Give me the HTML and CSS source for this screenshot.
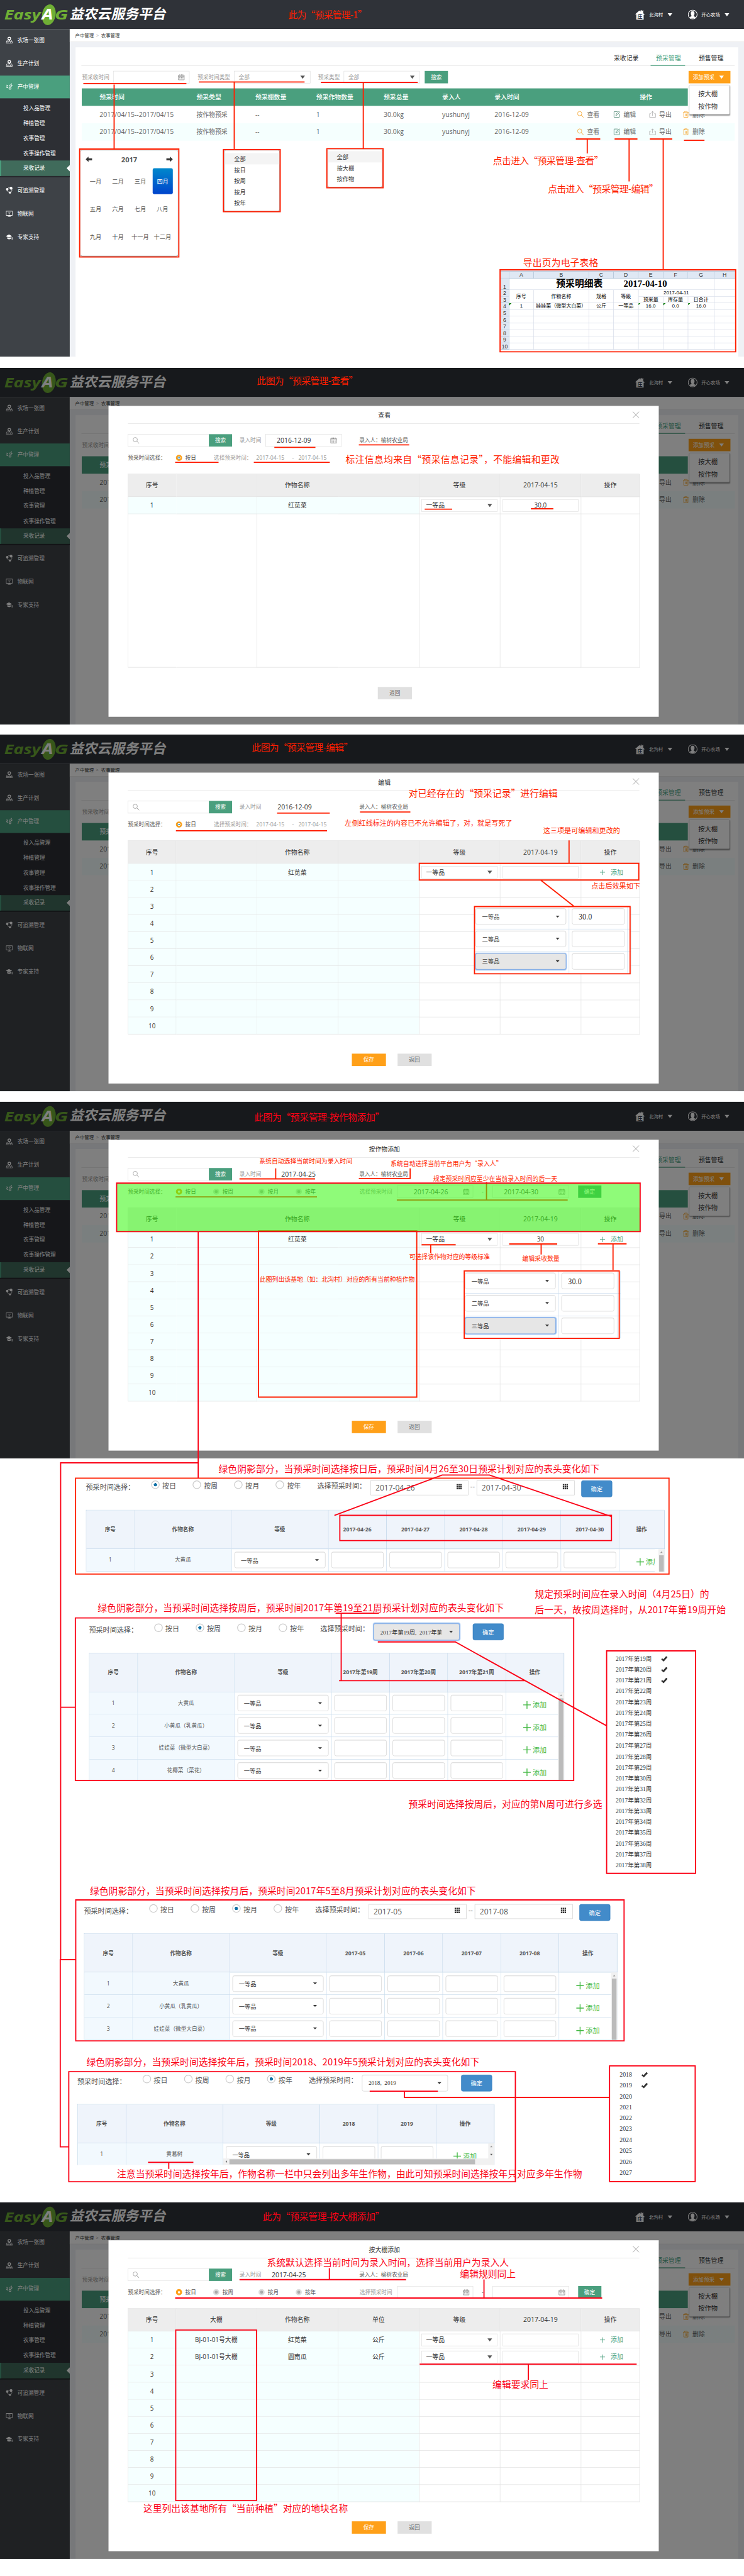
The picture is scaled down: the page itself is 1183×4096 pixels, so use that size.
FILE: index.html
```html
<!DOCTYPE html>
<html lang="zh-CN">
<head>
<meta charset="utf-8">
<title>益农云服务平台 - 预采管理</title>
<link rel="stylesheet" href="styles.css">
</head>
<body>
<svg width="0" height="0" class="defs">
  <symbol id="i-pin" viewBox="0 0 20 20"><path d="M10 1a5 5 0 0 1 5 5c0 3-3 5-5 8-2-3-5-5-5-8a5 5 0 0 1 5-5z" fill="currentColor"/><circle cx="10" cy="6" r="2.4" fill="#3e4247"/><path d="M5 12H3l-2 7h18l-2-7h-2M2 15.500h16M7 14l-1 5M13 14l1 5" fill="none" stroke="currentColor" stroke-width="1.400"/></symbol>
  <symbol id="i-leaf" viewBox="0 0 20 20"><path d="M2 5c3 0 4 2 4 5C3 10 2 8 2 5zM1 10c3 0 5 2 6 5-4 0-6-2-6-5zM17 1c1 3-1 5-4 6 0-3 1-5 4-6zM19 6c0 3-2 5-6 5 0-3 2-5 6-5zM10 4c2 2 2 5 0 7-1-2-1-5 0-7z" fill="currentColor"/><circle cx="12" cy="15" r="3" fill="none" stroke="currentColor" stroke-width="2"/></symbol>
  <symbol id="i-nodes" viewBox="0 0 20 20"><circle cx="4" cy="7" r="3.600" fill="currentColor"/><circle cx="15" cy="4" r="4" fill="currentColor"/><circle cx="12" cy="16.500" r="3" fill="currentColor"/><path d="M4 7c0 6 3 8 8 9.500M15 4c4 4 3 9-2 12M5 5c2-3 6-3 10-1" fill="none" stroke="currentColor" stroke-width="1.300"/></symbol>
  <symbol id="i-screen" viewBox="0 0 20 20"><path d="M1 3h18v12H1zM6 18h8M10 15v3" fill="none" stroke="currentColor" stroke-width="1.800"/><path d="M6 8q4-3 8 0M8 10q2-1.500 4 0" fill="none" stroke="currentColor"/><circle cx="10" cy="12" r="1" fill="currentColor"/></symbol>
  <symbol id="i-cap" viewBox="0 0 20 20"><path d="M0 8l9-5 9 5-9 4zM4 11l5 2.500 6-2.500v4c-3 2.500-8 2.500-11 0zM17 11h2v7h-2z" fill="currentColor"/></symbol>
  <symbol id="i-cal" viewBox="0 0 18 16"><path d="M1.500 3h15v12h-15zM1.500 6.500h15M5 .5v4M9 .5v4M13 .5v4" fill="none" stroke="#666"/><path d="M4 9.500h10M4 12.500h10" stroke="#666" stroke-width="1.400" stroke-dasharray="2 2"/></symbol>
  <symbol id="i-search" viewBox="0 0 18 18"><circle cx="7" cy="7" r="5.500" fill="none" stroke="currentColor" stroke-width="1.300"/><path d="M11 11l6 6" stroke="currentColor" stroke-width="1.600"/></symbol>
  <symbol id="i-edit" viewBox="0 0 20 20"><path d="M12 2H3a1.500 1.500 0 0 0-1.500 1.500V17A1.500 1.500 0 0 0 3 18.500h13a1.500 1.500 0 0 0 1.500-1.500V9M7 13l1-4 8-7.500 2.500 2.500-8 8z" fill="none" stroke="#3c7a64" stroke-width="1.400"/></symbol>
  <symbol id="i-out" viewBox="0 0 20 20"><path d="M5 8H1.500v10.500h17V8H15M10 14V1.500M6 5.500l4-4 4 4" fill="none" stroke="#999" stroke-width="1.200"/></symbol>
  <symbol id="i-bin" viewBox="0 0 18 20"><path d="M1 4.500h16M5.500 4V1.500h7V4M3 4.500v14h12v-14M7 8v7.500M11 8v7.500" fill="none" stroke="#f5a328" stroke-width="1.500"/></symbol>
  <symbol id="i-x" viewBox="0 0 18 18"><path d="M1 1l16 16M17 1L1 17" stroke="#999" stroke-width="1.500"/></symbol>
  <symbol id="i-grid" viewBox="0 0 14 14"><path d="M0 2h14M0 7h14M0 12h14" stroke="#333" stroke-width="4" stroke-dasharray="4 1"/></symbol>
  <symbol id="i-check" viewBox="0 0 18 16"><path d="M0 9l3-3 3 3L14 0l4 3L7 15z" fill="#333"/></symbol>
  <symbol id="i-plus" viewBox="0 0 20 20"><path d="M10 0v20M0 10h20" stroke="currentColor" stroke-width="2.200"/></symbol>
</svg>

<main class="frame">
<div class="board">
  <section class="screen" data-screen="list"></section>
  <section class="screen under" data-screen="view"></section>
  <section class="screen under" data-screen="edit"></section>
  <section class="screen under" data-screen="crop"></section>
  <div class="variants"></div>
  <section class="screen under" data-screen="shed"></section>

  <svg class="marks" viewBox="0 0 1920 6645" width="1920" height="6645">
    <g class="ln">
      <path d="M215 215.500H481M294.500 218V384M205.500 384.500H461.500V663H205.500zM513 211.500H786M604.500 212V386M576.500 386H723V546H576.500zM828 212.500H1078M937.500 213V383M843.500 383.500H988.500V484.500H843.500z"/>
      <path d="M1486 358.500H1549M1515.500 358V396M1586 358.500H1645M1623.500 360V468M1677 358.500H1735M1711.500 360V695M1765 362H1818M1290.500 696H1898.500V907.500H1290.500z"/>
      <path d="M708 1154H814M926 1147.500H1056M452 1192.500H564M655 1192.500H851M1096 1313.500H1167M1370 1312.500H1428"/>
      <path d="M715 2097.500H851M929 2094.500H1059M454 2143H844M1468.500 2168V2226M1082 2227H1648.500V2270H1082zM1396 2271L1480 2337M1224.500 2338.500H1626V2512H1224.500z"/>
      <path d="M618 3041H813M711.500 3014V3041M926 3040H1060M1058.500 3014V3040M453 3087.500H818M1255.500 3049V3094M1024 3095.500H1465M667 3175H1075.500V3604H667zM1088 3211H1176M1111.500 3211V3233M1314 3209H1438M1396.500 3209V3236M1543 3208.500H1617M1582 3208V3276M1198 3278.500H1598V3452.500H1198z"/>
      <path d="M195 3813H1726.500V4060.500H195z"/>
    </g>
    <rect x="301" y="3052" width="1351" height="125" class="shade"/>
    <g class="ln b">
      <path d="M301 3052H1652V3177H301zM511.500 3178V3813M511.500 3773.500H156.500V5055H195M156.500 4404H194M155.500 5054V5538H177"/>
      <path d="M877 3909H1578V3974H877zM863 3909L1141 3805H1263L1578 3912"/>
      <path d="M194.500 4173.500H1480.500V4593H194.500zM866 4161.500H978M880.500 4161V4336M875 4335.500H1355M975 4235.500H1175L1564 4451M1565.500 4258.500H1795V4832.500H1565.500z"/>
      <path d="M195.500 4901H1610.500V5264.500H195.500zM177.500 5344H1330V5628H177.500zM954 5394.500H1130M1043.500 5394V5410.500H1572M1573 5329H1794V5627.500H1573zM382 5578H499M435.500 5578V5595"/>
      <path d="M618 5880.500H1048M850 5851V5880M1249 5880V5928M452 5928H1554M453.500 6010.500H662V6450.500H453.500zM1083 6098.500H1643M1363.500 6098V6139"/>
    </g>
    <g class="note">
      <text x="744" y="47" textLength="203">此为“预采管理-1”</text>
      <text x="1272" y="424" textLength="285">点击进入“预采管理-查看”</text>
      <text x="1414" y="496" textLength="285">点击进入“预采管理-编辑”</text>
      <text x="1350" y="687" textLength="194">导出页为电子表格</text>
      <text x="663" y="991" textLength="261">此图为“预采管理-查看”</text>
      <text x="892" y="1194" textLength="552">标注信息均来自“预采信息记录”，不能编辑和更改</text>
      <text x="650" y="1937" textLength="261">此图为“预采管理-编辑”</text>
      <text x="1054" y="2056" textLength="385">对已经存在的“预采记录”进行编辑</text>
      <text x="890" y="2130" textLength="432" class="s18">左侧红线标注的内容已不允许编辑了，对，就是写死了</text>
      <text x="1402" y="2150" textLength="198" class="s18">这三项是可编辑和更改的</text>
      <text x="1526" y="2293" textLength="126" class="s18">点击后效果如下</text>
      <text x="669" y="3001" textLength="240" class="s16">系统自动选择当前时间为录入时间</text>
      <text x="1008" y="3007" textLength="288" class="s16">系统自动选择当前平台用户为“录入人”</text>
      <text x="1118" y="3046" textLength="320" class="s16">规定预采时间应至少在当前录入时间的后一天</text>
      <text x="1056" y="3248" textLength="208" class="s16">可选择该作物对应的等级标准</text>
      <text x="1348" y="3252" textLength="96" class="s16">编辑采收数量</text>
      <text x="670" y="3307" textLength="400" class="s16">此图列出该基地（如：北沟村）对应的所有当前种植作物</text>
    </g>
    <g class="note nb">
      <text x="656" y="2891" textLength="336">此图为“预采管理-按作物添加”</text>
      <text x="564" y="3798" textLength="983">绿色阴影部分，当预采时间选择按日后，预采时间4月26至30日预采计划对应的表头变化如下</text>
      <text x="252" y="4157" textLength="1048">绿色阴影部分，当预采时间选择按周后，预采时间2017年第19至21周预采计划对应的表头变化如下</text>
      <text x="1380" y="4121" textLength="450">规定预采时间应在录入时间（4月25日）的</text>
      <text x="1380" y="4162" textLength="493">后一天，故按周选择时，从2017年第19周开始</text>
      <text x="1054" y="4663" textLength="500">预采时间选择按周后，对应的第N周可进行多选</text>
      <text x="232" y="4886" textLength="996">绿色阴影部分，当预采时间选择按月后，预采时间2017年5至8月预采计划对应的表头变化如下</text>
      <text x="223" y="5328" textLength="1014">绿色阴影部分，当预采时间选择按年后，预采时间2018、2019年5预采计划对应的表头变化如下</text>
      <text x="302" y="5617" textLength="1200">注意当预采时间选择按年后，作物名称一栏中只会列出多年生作物，由此可知预采时间选择按年只对应多年生作物</text>
      <text x="678" y="5727" textLength="314">此为“预采管理-按大棚添加”</text>
      <text x="689" y="5846" textLength="624">系统默认选择当前时间为录入时间，选择当前用户为录入人</text>
      <text x="1187" y="5875" textLength="144">编辑规则同上</text>
      <text x="1271" y="6160" textLength="144">编辑要求同上</text>
      <text x="370" y="6480" textLength="528">这里列出该基地所有“当前种植”对应的地块名称</text>
    </g>
  </svg>
</div>
</main>
<script src="app.js"></script>
</body>
</html>
```

FILE: styles.css
```css
* { box-sizing: border-box; }
body { margin: 0; background: #fff; }
.defs { position: absolute; }
.frame { width: 1183px; height: 4096px; overflow: hidden; position: relative; contain: strict; }
.board {
  width: 1920px; height: 6645px; position: relative; background: #fff;
  transform: scale(.616146, .616403); transform-origin: 0 0;
  font: 14px/20px "Open Sans", "Noto Sans CJK SC", sans-serif; color: #333; white-space: nowrap;
}
.ico { width: 18px; height: 18px; flex: none; display: block; }

/* shell */
.screen { height: 920px; position: relative; overflow: hidden; background: #eff1f5; }
.screen[data-screen="view"] { margin-top: 29px; }
.screen[data-screen="edit"] { margin-top: 26px; }
.screen[data-screen="crop"] { margin-top: 27px; }
.top { height: 75px; background: #2f3238; display: flex; align-items: center; color: #fff; font-size: 12px; padding-right: 38px; }
.logo { width: 450px; height: 75px; margin-right: auto; }
.logo text { font-family: "Open Sans", "Noto Sans CJK SC", sans-serif; font-weight: bold; }
.house { width: 26px; height: 26px; margin-right: 10px; }
.house text { font: bold 13px "Noto Sans CJK SC"; }
.tri { border: 6px solid transparent; border-top: 8px solid #fff; border-bottom: 0; margin-left: 12px; }
.user { width: 25px; height: 25px; margin: 0 10px 0 40px; }
.cols { display: flex; height: 845px; }
.side { width: 180px; background: #3e4247; color: #fff; flex: none; }
.side > div { height: 60px; display: flex; align-items: center; padding: 0 0 4px 15px; gap: 12px; }
.side > .on { background: #4a9f7e; height: 59px; margin-bottom: 0; }
.side .sub { display: block; background: #2d2f34; height: 203px; padding: 7px 0 0; border-bottom: 3px solid #27292d; }
.sub p { margin: 0; height: 38.5px; padding-left: 60px; line-height: 36px; }
.sub .act { background: #406b5b; border-left: 3px solid #4a9f7e; padding-left: 57px; height: 40px; position: relative; line-height: 38px; margin-top: -1px; }
.act::after { content: ""; position: absolute; right: 0; top: 12px; border: 8px solid transparent; border-left: 0; border-right-color: #fff; }
.side .gap { margin-top: 6px; }
.main { flex: 1; }
.crumb { height: 33px; background: #fff; border-bottom: 1px solid #ddd; font-size: 12px; padding-left: 14px; line-height: 33px; }
.crumb i { font-style: normal; color: #999; margin: 0 6px; }
.panel { margin: 14px 15px 0 15px; background: #fff; height: 798px; position: relative; padding: 0 9px 0 15px; }
.tabs { height: 48px; border-bottom: 1px solid #ddd; display: flex; justify-content: flex-end; padding-right: 11px; }
.tabs span { font-size: 16px; line-height: 57px; margin-left: 28px; padding: 0 18px 0 18px; height: 48px; }
.tabs .on { color: #4a9f7e; border-bottom: 2px solid #4a9f7e; padding: 0 11px 0 14px; margin-left: 13px; }
.tabs .on + span { margin-left: 17px; }
.filters { display: flex; height: 32px; margin-top: 13px; padding-left: 2px; align-items: center; color: #999; }
.box { border: 1px solid #dcdcdc; height: 32px; display: flex; align-items: center; justify-content: space-between; padding: 0 11px; background: #fff; margin-left: 10px; }
.w197 { width: 197px; }
.dn { border: 6px solid transparent; border-top: 8px solid #555; border-bottom: 0; margin-right: 2px; }
.btn { background: #4a9f7e; color: #fff; height: 32px; width: 60px; line-height: 32px; text-align: center; flex: none; }
.btn.orange { background: #ffa019; }
.btn.add { width: 108px; margin-left: auto; margin-right: 11px; display: flex; align-items: center; padding-left: 11px; }
.list { margin-top: 13px; margin-left: 1px; font-size: 16px; color: #666; }
.lr { display: grid; grid-template-columns: 250px 152px 157px 174px 151px 135px 213px 94px 92px 86px 1fr; padding-left: 46px; height: 45px; align-items: center; padding-bottom: 1px; }
.lr.h { background: #4a9f7e; color: #fff; width: 1564px; font-weight: 500; }
.lr.alt { background: #f5fffe; }
.lr .n { font-size: 17px; }
.op { display: flex; align-items: center; gap: 8px; }
.op .ico { color: #f5a328; }
.drop { position: absolute; z-index: 2; left: 1583px; top: 97px; width: 105px; height: 76px; background: #fff; border: 1px solid #ccc; border-radius: 3px; box-shadow: 1px 2px 3px rgba(0,0,0,.4); padding: 7px 0 0 23px; font-size: 16.700px; line-height: 31px; }

/* parts of the page that lie behind an open dialog */
.under .tabs > :first-child,
.under .lr > :nth-child(n+2):nth-child(-n+9),
.under .lr.h > :nth-child(n+2),
.under .filters > :not(.add):not(:first-child) { visibility: hidden; }
.under .lr > :first-child { width: 28px; overflow: hidden; }
.under .filters > :first-child { width: 70px; clip-path: inset(0 0 0 0); }

.pop { position: absolute; background: #fff; border-radius: 4px; box-shadow: 0 1px 3px rgba(0,0,0,.5); }
.pick { left: 208px; top: 388px; width: 251px; height: 272px; font-size: 15px; color: #555; }
.pick header { display: flex; justify-content: space-between; align-items: center; padding: 0 13px; height: 46px; padding-top: 0; }
.pick header b { font-size: 18px; }
.months { display: grid; grid-template-columns: 57.500px 57.500px 57.500px 57.500px; grid-template-rows: 67px 67px 67px; row-gap: 5px; padding-left: 10px; line-height: 67px; text-align: center; }
.months .on { background: linear-gradient(#08c, #04c); color: #fff; border-radius: 4px; margin: 0 2px 0 3px; }
.opts { font-size: 15px; line-height: 28.500px; }
.opts div { padding-left: 25px; }
.opts div:first-child { background: #f4f4f4; }
.o1 { left: 579px; top: 388px; width: 142px; height: 156px; padding-top: 7px; }
.o2 { left: 846px; top: 386px; width: 140px; height: 96px; padding-top: 4px; }
.o2 div { padding-left: 23px; }
.sheet { position: absolute; left: 1292px; top: 697px; width: 605px; height: 209px; overflow: hidden; display: grid; background: #fff; grid-template-columns: 22px 63.500px 142.500px 64px 63.500px 64.500px 63.500px 68px 54px; grid-template-rows: 4px 17px 30px 17px 17px repeat(8, 17.200px); font: 13px/16px "Liberation Sans", "Noto Sans CJK SC", sans-serif; color: #000; text-align: center; }
.sheet > * { border-right: 1px solid #d0d7e5; border-bottom: 1px solid #d0d7e5; overflow: hidden; }
.sheet .hd { background: #dfe8f4; border-color: #9eb6ce; color: #333; font-size: 14px; display: flex; align-items: flex-end; justify-content: center; }
.sheet .ttl { font: bold 24px/29px "Liberation Serif", "Noto Sans CJK SC", serif; display: flex; justify-content: center; gap: 54px; }
.sheet .mid { line-height: 33px; }
.sheet .tk { background: linear-gradient(135deg, #0a7a0a 4px, transparent 4px); }

/* modal */
.mask { position: absolute; inset: 0; background: rgba(0,0,0,.5); z-index: 3; }
.modal { position: absolute; z-index: 4; left: 280px; top: 98px; width: 1420px; height: 802px; background: #fff; padding: 0 50px; }
.mh { height: 46px; border-bottom: 1px solid #ddd; font-size: 16px; text-align: center; line-height: 50px; position: relative; padding-left: 4px; }
.mh .ico { position: absolute; right: 0; top: 14px; }
.r1 { display: flex; align-items: center; height: 32px; margin-top: 27px; }
.r1 .box:first-child { width: 209px; margin: 0; color: #999; border-right: 0; }
.gl { color: #999; }
.date { font-size: 17px; }
.bare { border-color: transparent; }
.r1 .who { margin-left: 45px; color: #555; }
.r2 { display: flex; align-items: center; height: 32px; margin-top: 13px; color: #555; }
.rad { width: 16px; height: 16px; border-radius: 50%; border: 4px solid #ddd; background: #aaa; margin-right: 8px; flex: none; }
.rad.on { border: 5px solid #ffa019; background: #fff; }
.rad.blue { border-width: 4px; background: #1a85c8; box-shadow: inset 0 0 0 2px #fff; }
.opt { display: flex; align-items: center; }
.r2 .box { margin-left: 0; padding-right: 8px; }
.grid { display: grid; margin-top: 25px; border-top: 1px solid #ddd; border-left: 1px solid #ddd; grid-template-columns: 123.500px 208px 210.500px 208.500px 209px 209.500px 151px; grid-template-rows: 59px; grid-auto-rows: 44px; font-size: 16px; color: #333; }
.grid.single { grid-template-rows: 59px 44px 396px; }
.grid > div { border-right: 1px solid #ddd; border-bottom: 1px solid #ddd; display: flex; align-items: center; justify-content: center; }
.grid > .h { background: #ededed; }
.grid > .t { background: #f5ffff; }
.grid > .nl { border-right-color: transparent; }
.grid .box { width: 196px; margin: 0; }
.grid .c { justify-content: center; }
.addop { color: #4a9f7e; display: flex; align-items: center; gap: 14px; padding-left: 6px; }
.addop .ico { width: 14px; height: 14px; }
.acts { display: flex; gap: 30px; padding-left: 577.500px; margin-top: 50px; }
.acts.one { padding-left: 645px; }
.acts span { width: 88px; height: 32px; line-height: 32px; text-align: center; background: #e0e0e0; color: #666; }
.acts .save { background: #ffa019; color: #fff; }
.mini { position: absolute; z-index: 5; width: 400px; height: 173px; background: #fff; display: grid; grid-template-columns: 243px 151px 6px; grid-auto-rows: 57.800px; }
.mini.m-edit { left: 1226px; top: 444px; }
.mini.m-crop { left: 1199px; top: 437px; }
.mini > div { border-right: 1px solid #c5d9ec; border-bottom: 1px solid #c5d9ec; padding: 4px 7px 0 1px; }
.mini > div:nth-child(3n+2) { padding-left: 7px; }

/* date-range variants */
.variants { height: 1919px; overflow: hidden; position: relative; color: #555; }
.vr { width: 1600px; overflow: hidden; position: relative; }
.v-day { margin: 53px 0 0 197px; width: 1528px; height: 244px; padding: 4px 0 0 24.500px; }
.v-week { margin: 116px 0 0 196px; width: 1283px; height: 416px; padding: 13px 0 0 33.500px; }
.v-month { margin: 311px 0 0 197px; width: 1412px; height: 361px; padding: 9.500px 0 0 19.500px; }
.v-year { margin: 82px 0 0 179px; width: 1150px; height: 240px; padding: 7px 0 0 20.500px; }
.form { display: flex; align-items: flex-start; font-size: 18px; height: 43px; }
.form .lb { width: 168px; line-height: 34px; }
.form .opt { width: 107.300px; align-items: flex-start; line-height: 28px; }
.circ { width: 22px; height: 22px; border: 2px solid #ccc; border-radius: 50%; margin-right: 7px; flex: none; }
.circ.on { background: radial-gradient(#1273a8 0 4px, #fff 4.500px); }
.form .sl { width: 137.300px; line-height: 28px; }
.form .box { height: 38px; width: 253px; margin: 0; border-color: #ccc; padding: 0 16px 0 12px; font-size: 19.500px; }
.form .box .ico { width: 14px; height: 14px; margin-top: -6px; }
.form .dd { width: 21px; text-align: center; line-height: 28px; flex: none; }
.fld { height: 42px; border: 1px solid #ccc; border-radius: 5px; background: #fff; box-shadow: inset 0 1px 1px rgba(0,0,0,.08); display: flex; align-items: center; justify-content: space-between; padding: 0 16px; font: 15px "Noto Sans CJK SC", sans-serif; color: #333; width: 100%; overflow: hidden; }
.fld.g { background: #e6e6e6; border: 1px solid #6f9fe0; box-shadow: 0 0 2px 1px #8ab6f0; }
.fld.num { font-size: 18px; }
.form .fld { width: 222px; height: 43px; font: 15px "Liberation Serif", "Noto Sans CJK SC", serif; white-space: pre; }
.form .fld span { overflow: hidden; width: 158px; }
.car { border: 5px solid transparent; border-top: 5px solid #333; border-bottom: 0; flex: none; }
.ok { background: #428bca; border: 1px solid #357ebd; border-radius: 5px; color: #fff; width: 80px; height: 43px; line-height: 43px; font-size: 15px; text-align: center; margin-left: 17px; }
.form .fld + .ok { margin-left: 34px; }
.vt { margin-top: 32.500px; display: grid; grid-template-rows: 100px; grid-auto-rows: 58px; border-left: 1px solid #b3cde3; border-top: 1px solid #b3cde3; position: relative; font-size: 14px; }
.vt > div { border-right: 1px solid #c5d9ec; border-bottom: 1px solid #c5d9ec; display: flex; align-items: center; justify-content: center; padding: 0 7px; }
.vt > .h { background: #eff4fb; border-color: #b3cde3; font-weight: bold; }
.vt > .t { background: #f2f9fe; }
.vt > .a { color: #44b944; font-size: 18px; gap: 5px; justify-content: flex-start; padding: 10px 0 0 44px; }
.vt > .a .ico { width: 20px; height: 20px; }
.vt > .sb { position: absolute; right: 0; top: 100px; bottom: 0; width: 16px; background: #f1f1f1; border: 0; padding: 0; display: block; }
.sb::before { content: ""; position: absolute; left: 5px; top: 6px; border: 3px solid transparent; border-top: 0; border-bottom: 4px solid #999; }
.sb::after { content: ""; position: absolute; left: 2px; right: 2px; top: 16px; bottom: 0; background: #bbb; }
.v-day .vt > .sb { box-shadow: -9px 0 #fff; }
.v-year .sb { bottom: 16px; }
.v-year .sb::after { background: none; border: 3px solid transparent; border-top: 4px solid #555; top: 27px; left: 5px; right: auto; bottom: auto; }
.vt > .hb { position: absolute; left: 375px; right: 0; top: 139px; height: 17px; background: #f1f1f1; border: 0; }
.hb::after { content: ""; position: absolute; left: 16px; right: 50px; top: 2px; bottom: 2px; background: #bbb; }
.hb::before { content: ""; position: absolute; left: 6px; top: 5px; border: 3.500px solid transparent; border-left: 0; border-right: 4px solid #777; }
.wl { position: absolute; left: 1567px; font: 15.500px/28.060px "Liberation Serif", "Noto Sans CJK SC", serif; color: #333; }
.wl div { display: flex; align-items: center; }
.wl .ico { width: 17px; height: 15px; margin-left: 24px; }
.wl.weeks { top: 503px; padding-left: 22px; }
.wl.years { top: 1576px; padding-left: 32px; font-size: 16px; }

/* annotations */
.marks { position: absolute; left: 0; top: 0; z-index: 9; }
.ln path { fill: none; stroke: #ff1e00; stroke-width: 3; }
.ln.b path { stroke: #fb0216; }
.shade { fill: rgba(56,248,16,.56); }
.note { font: 24px "Noto Sans CJK SC", sans-serif; fill: #ff1e00; }
.nb { fill: #fb0216; }
.s18 { font-size: 18px; }
.s16 { font-size: 16px; }
```

FILE: app.js
```js
const ico = (n, c = '') => `<svg class="ico ${c}"><use href="#i-${n}"/></svg>`;
const side = (i, t, c = '') => `<div class="${c}">${ico(i)}<span>${t}</span></div>`;

const op = (i, t) => `<span class="op">${ico(i)}${t}</span>`;
const listRow = c => `<div class="lr ${c}"><span class="n">2017/04/15--2017/04/15</span><span>按作物预采</span><span>--</span><span class="n">1</span><span class="n">30.0kg</span><span class="n">yushunyj</span><span class="n">2016-12-09</span>${op('search', '查看')}${op('edit', '编辑')}${op('out', '导出')}${op('bin', '删除')}</div>`;

const shell = `
<div class="top">
  <svg class="logo" viewBox="0 0 450 75">
    <g fill="#6faf35" font-style="italic" font-size="36"><text x="11" y="50" textLength="94" lengthAdjust="spacingAndGlyphs">Easy</text><text x="141" y="50" textLength="35" lengthAdjust="spacingAndGlyphs">G</text></g>
    <ellipse cx="126" cy="38" rx="17.500" ry="27" transform="rotate(10 126 38)" fill="#6faf35"/>
    <text x="108" y="50" font-size="37" fill="#fff" font-style="italic" textLength="29" lengthAdjust="spacingAndGlyphs">A</text>
    <text transform="translate(180 48) skewX(-12)" font-size="35.500" fill="#fff" textLength="248">益农云服务平台</text>
  </svg>
  <svg class="house" viewBox="0 0 26 26"><path d="M0 12L11 2l3 3V2l3-2v4l4-3v8l4 4h-3v13H3V12z" fill="#fff"/><text x="6" y="22" fill="#2f3238">庄</text></svg>北沟村<i class="tri"></i>
  <svg class="user" viewBox="0 0 26 26"><circle cx="13" cy="13" r="12" fill="none" stroke="#fff" stroke-width="1.800"/><path d="M13 4c4 0 5 3 5 6s-1 5-2 6c0 3 4 2 5 4-4 5-12 5-16 0 1-2 5-1 5-4-1-1-2-3-2-6s1-6 5-6z" fill="#fff"/></svg>开心农场<i class="tri"></i>
</div>
<div class="cols">
  <nav class="side">
    ${side('pin', '农场一张图')}${side('pin', '生产计划')}${side('leaf', '产中管理', 'on')}
    <div class="sub"><p>投入品管理</p><p>种植管理</p><p>农事管理</p><p>农事操作管理</p><p class="act">采收记录</p></div>
    ${side('nodes', '可追溯管理', 'gap')}${side('screen', '物联网')}${side('cap', '专家支持')}
  </nav>
  <div class="main">
    <div class="crumb">产中管理<i>&gt;</i>农事管理</div>
    <div class="panel">
      <div class="tabs"><span>采收记录</span><span class="on">预采管理</span><span>预售管理</span></div>
      <div class="filters"><span>预采收时间</span><div class="box w197"><i></i>${ico('cal')}</div>
        <span style="margin-left:21px">预采时间类型</span><div class="box w197"><span>全部</span><i class="dn"></i></div>
        <span style="margin-left:20px">预采类型</span><div class="box w197"><span>全部</span><i class="dn"></i></div>
        <div class="btn" style="margin-left:12px">搜索</div><div class="btn orange add">添加预采<i class="tri"></i></div></div>
      <div class="list">
        <div class="lr h"><span>预采时间</span><span>预采类型</span><span>预采棚数量</span><span>预采作物数量</span><span>预采总量</span><span>录入人</span><span>录入时间</span><i></i><span></span><span style="margin-left:-24px">操作</span></div>
        ${listRow('')}${listRow('alt')}
      </div>
      <div class="drop">按大棚<br>按作物</div>
    </div>
  </div>
</div>`;

const arrow = d => `<svg width="17" height="14" viewBox="0 0 16 13"><path d="${d}" fill="#333"/></svg>`;
const months = ['一', '二', '三', '四', '五', '六', '七', '八', '九', '十', '十一', '十二'];

function sheet() {
  let h = '';
  const cell = (r, c, t, k = '', rs = 1, cs = 1) => { h += `<div class="${k}" style="grid-area:${r}/${c}/span ${rs}/span ${cs}">${t}</div>`; };
  cell(1, 1, '', 'hd', 1, 9);
  ['', 'A', 'B', 'C', 'D', 'E', 'F', 'G', 'H'].forEach((t, i) => cell(2, i + 1, t, 'hd'));
  for (let r = 1; r <= 10; r++) cell(r + 2, 1, r, 'hd');
  cell(3, 2, '<span>预采明细表</span><span>2017-04-10</span>', 'ttl', 1, 7);
  ['序号', '作物名称', '规格', '等级'].forEach((t, i) => cell(4, i + 2, t, 'mid', 2));
  cell(4, 6, '2017-04-11', '', 1, 3);
  ['预采量', '库存量', '日合计'].forEach((t, i) => cell(5, i + 6, t));
  ['1', '娃娃菜（微型大白菜）', '公斤', '一等品', '16.0', '0.0', '16.0'].forEach((t, i) => cell(6, i + 2, t, [0, 4, 5, 6].includes(i) ? 'tk' : ''));
  for (let r = 7; r < 13; r++) for (let c = 2; c < 9; c++) cell(r, c, '');
  for (let r = 3; r < 13; r++) cell(r, 9, '');
  return `<div class="sheet">${h}</div>`;
}

const listPopups = `
<div class="pop pick"><header>${arrow('M0 6.500L7 0v4h9v5H7v4z')}<b>2017</b>${arrow('M16 6.500L9 0v4H0v5h9v4z')}</header>
<div class="months">${months.map((m, i) => `<span class="${i === 3 ? 'on' : ''}">${m}月</span>`).join('')}</div></div>
<div class="pop opts o1"><div>全部</div><div>按日</div><div>按周</div><div>按月</div><div>按年</div></div>
<div class="pop opts o2"><div>全部</div><div>按大棚</div><div>按作物</div></div>${sheet()}`;

const rad = (t, on, w) => `<span class="opt" style="width:${w}px"><i class="rad ${on}"></i>${t}</span>`;
const sel = '<div class="box"><span>一等品</span><i class="dn"></i></div>';

function modal(o) {
  const range = o.dates;
  let r2 = '<span style="width:124px">预采时间选择：</span>';
  if (range) {
    const f = (d, p, w) => `<div class="box" style="width:${w}px;padding-left:${p}px"><span class="date">${d}</span>${ico('cal')}</div>`;
    r2 += rad('按日', 'on', 96) + rad('按周', '', 117) + rad('按月', '', 96) + rad('按年', '', 165) +
      `<span class="gl" style="width:96.5px">选择预采时间</span>${f(range[0], 42, 196)}<span style="width:50px;text-align:center">-</span>${f(range[1], 29, 197)}<div class="btn" style="margin-left:24px">确定</div>`;
  } else {
    r2 += rad('按日', 'on blue', 98) + '<span class="gl" style="width:109px">选择预采时间：</span><span class="gl" style="width:93px">2017-04-15</span><span class="gl" style="width:16px">-</span><span class="gl">2017-04-15</span>';
  }
  const nl = i => (o.merge && (i === 0 || i === 2) ? ' nl' : '');
  let cells = ['序号', o.shed ? '大棚' : '', '作物名称', o.shed ? '单位' : '', '等级', o.col, '操作']
    .map((t, i) => `<div class="h${nl(i)}"><span class="${i === 5 ? 'date' : ''}">${t}</span></div>`).join('');
  for (let r = 0; r < o.rows; r++) {
    const d = o.data[r];
    const v = [r + 1, d ? d[0] : '', d ? d[1] : '', d ? d[2] : '', d ? sel : '', d ? `<div class="box c">${o.qty}</div>` : '',
      d && !o.view ? `<span class="addop">${ico('plus')}添加</span>` : ''];
    cells += v.map((t, i) => `<div class="${i < 4 ? 't' : ''}${nl(i)}">${t}</div>`).join('');
  }
  if (o.view) for (let i = 0; i < 7; i++) cells += `<div class="${nl(i)}"></div>`;
  return `<div class="mask"></div><div class="modal">
    <div class="mh">${o.title}${ico('x')}</div>
    <div class="r1"><div class="box">${ico('search')}</div><div class="btn">搜索</div><span class="gl" style="margin-left:19px;width:57px">录入时间</span>
      <div class="box w197 ${o.view ? '' : 'bare'}" style="padding-left:${o.pad}px"><span class="date">${o.date}</span>${o.view ? ico('cal') : ''}</div><span class="who">录入人：榆树农业局</span></div>
    <div class="r2">${r2}</div>
    <div class="grid ${o.view ? 'single' : ''}">${cells}</div>
    <div class="acts ${o.view ? 'one' : ''}">${o.view ? '' : '<span class="save">保存</span>'}<span>返回</span></div>
  </div>`;
}

const mini = c => `<div class="mini ${c}">` + ['一', '二', '三'].map((t, i) =>
  `<div><div class="fld ${i === 2 ? 'g' : ''}">${t}等品<i class="car"></i></div></div><div><div class="fld num">${i ? '' : '30.0'}</div></div><div></div>`).join('') + '</div>';

const extras = {
  list: listPopups,
  view: modal({ title: '查看', date: '2016-12-09', pad: 28, view: 1, merge: 1, col: '2017-04-15', rows: 1, data: [['', '红苋菜', '']], qty: '30.0' }),
  edit: modal({ title: '编辑', date: '2016-12-09', pad: 30, col: '2017-04-19', rows: 10, data: [['', '红苋菜', '']], qty: '' }) + mini('m-edit'),
  crop: modal({ title: '按作物添加', date: '2017-04-25', pad: 40, dates: ['2017-04-26', '2017-04-30'], merge: 1, col: '2017-04-19', rows: 10, data: [['', '红苋菜', '']], qty: '30' }) + mini('m-crop'),
  shed: modal({ title: '按大棚添加', date: '2017-04-25', pad: 15, dates: ['', ''], shed: 1, col: '2017-04-19', rows: 10, data: [['BJ-01-01号大棚', '红苋菜', '公斤'], ['BJ-01-01号大棚', '圆南瓜', '公斤']], qty: '' })
};
document.querySelectorAll('.screen').forEach(s => { s.innerHTML = shell + extras[s.dataset.screen]; });

function variant(cls, on, picker, cols, names, last = 150) {
  const radios = ['按日', '按周', '按月', '按年'].map((t, i) => `<span class="opt"><i class="circ ${i === on ? 'on' : ''}"></i>${t}</span>`).join('');
  const pick = picker.length === 2
    ? picker.map(p => `<div class="box"><span>${p}</span>${ico('grid')}</div>`).join('<span class="dd">--</span>')
    : `<div class="fld ${on === 1 ? 'g' : ''}"><span>${picker[0]}</span><i class="car"></i></div>`;
  const widths = [125, 250, 250, ...cols.map(() => 150), last].map(w => w + 'px').join(' ');
  const head = ['序号', '作物名称', '等级', ...cols, '操作'].map(t => `<div class="h">${t}</div>`).join('');
  const body = names.map((n, i) => `<div class="t">${i + 1}</div><div class="t">${n}</div><div><div class="fld">一等品<i class="car"></i></div></div>` +
    cols.map(() => '<div><div class="fld"></div></div>').join('') + `<div class="a">${ico('plus')}添加</div>`).join('');
  const w = 625 + cols.length * 150 + last + 1;
  return `<div class="vr ${cls}"><div class="form"><span class="lb">预采时间选择：</span>${radios}<span class="sl">选择预采时间：</span>${pick}<div class="ok">确定</div></div>
    <div class="vt" style="grid-template-columns:${widths};width:${w}px">${head}${body}<div class="sb"></div>${on === 3 ? '<div class="hb"></div>' : ''}</div></div>`;
}

const weeks = Array.from({ length: 20 }, (_, i) => `<div>2017年第${19 + i}周${i < 3 ? ico('check') : ''}</div>`).join('');
const years = Array.from({ length: 10 }, (_, i) => `<div>${2018 + i}${i < 2 ? ico('check') : ''}</div>`).join('');
document.querySelector('.variants').innerHTML =
  variant('v-day', 0, ['2017-04-26', '2017-04-30'], ['2017-04-26', '2017-04-27', '2017-04-28', '2017-04-29', '2017-04-30'], ['大黄瓜'], 117) +
  variant('v-week', 1, ['2017年第19周,  2017年第2'], ['2017年第19周', '2017年第20周', '2017年第21周'], ['大黄瓜', '小黄瓜（乳黄瓜）', '娃娃菜（微型大白菜）', '花椰菜（菜花）']) +
  variant('v-month', 2, ['2017-05', '2017-08'], ['2017-05', '2017-06', '2017-07', '2017-08'], ['大黄瓜', '小黄瓜（乳黄瓜）', '娃娃菜（微型大白菜）']) +
  variant('v-year', 3, ['2018,  2019'], ['2018', '2019'], ['黄葛树']) +
  `<div class="wl weeks">${weeks}</div><div class="wl years">${years}</div>`;
```
